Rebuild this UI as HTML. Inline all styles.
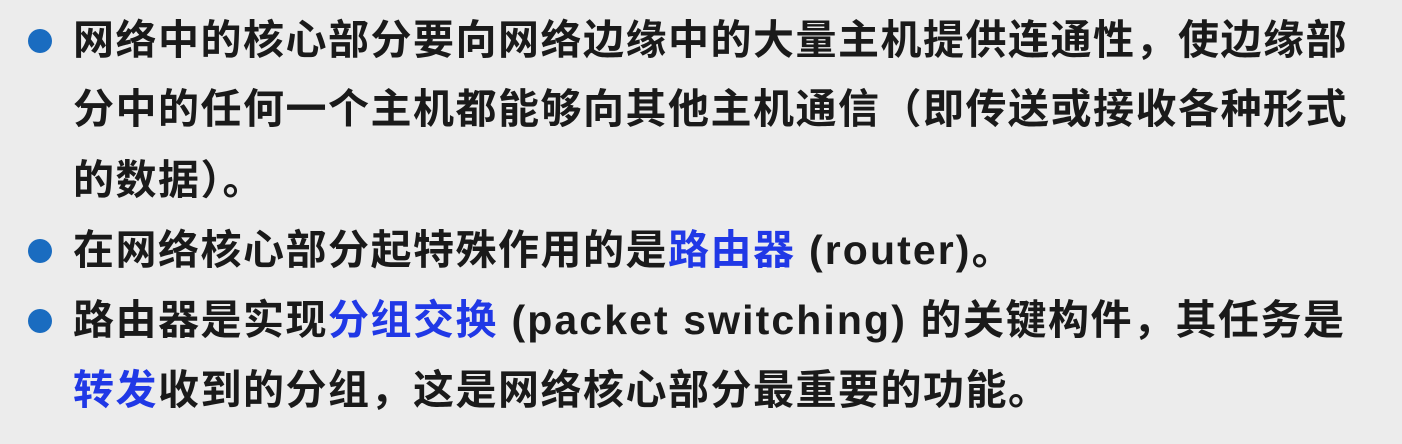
<!DOCTYPE html>
<html><head><meta charset="utf-8"><style>
body{margin:0;width:1402px;height:444px;background:#ececec;overflow:hidden;font-family:"Liberation Sans","Noto Sans CJK SC",sans-serif;font-weight:bold;color:#1a1a1a}
.l{position:absolute;left:73px;font-size:41px;line-height:70px;height:70px;letter-spacing:1.5px;white-space:nowrap}
.b{position:absolute;left:28px;width:24px;height:24px;border-radius:50%;background:#1a6cc0}
.c{color:#2038e6}
.e{letter-spacing:2.1px}
</style></head><body>
<div class="b" style="top:29px"></div>
<div class="l" style="top:5px">网络中的核心部分要向网络边缘中的大量主机提供连通性，使边缘部</div>
<div class="l" style="top:74px">分中的任何一个主机都能够向其他主机通信（即传送或接收各种形式</div>
<div class="l" style="top:145px">的数据）。</div>
<div class="b" style="top:239px"></div>
<div class="l" style="top:215px">在网络核心部分起特殊作用的是<span class="c">路由器</span><span class="e"> (router)</span>。</div>
<div class="b" style="top:309px"></div>
<div class="l" style="top:285px">路由器是实现<span class="c">分组交换</span><span class="e"> (packet switching) </span>的关键构件，其任务是</div>
<div class="l" style="top:355px"><span class="c">转发</span>收到的分组，这是网络核心部分最重要的功能。</div>
</body></html>
